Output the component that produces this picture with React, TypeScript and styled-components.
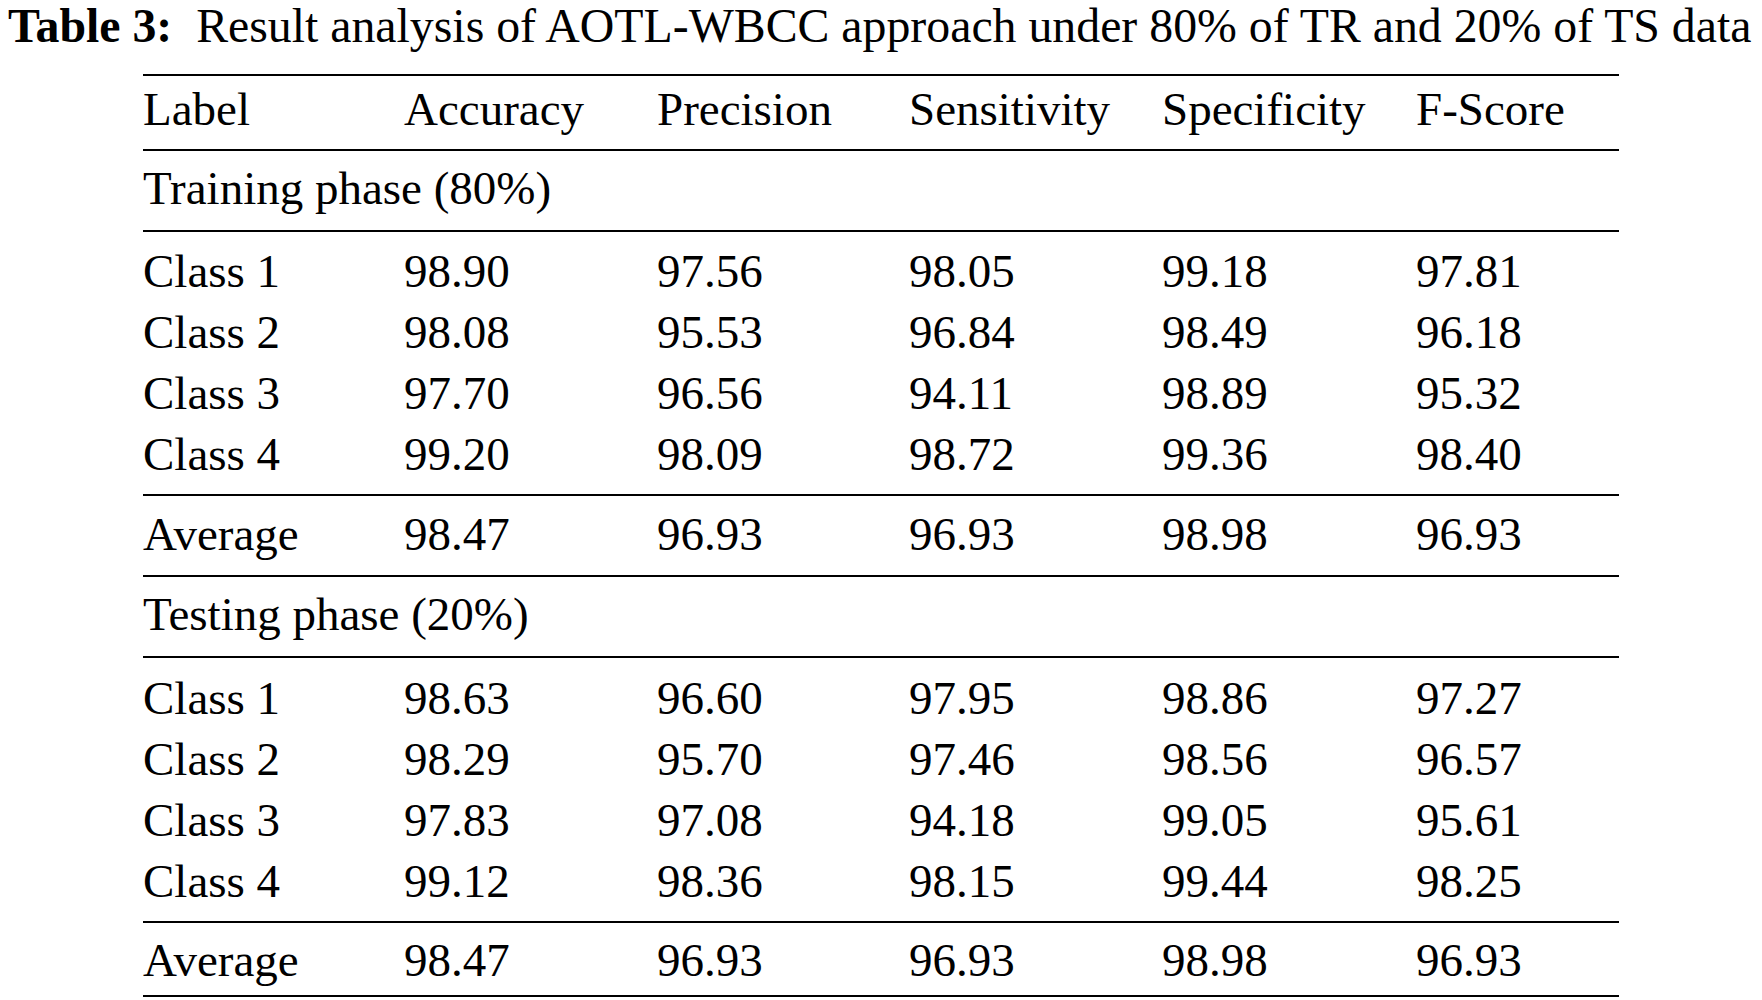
import React from 'react';
import styled, { createGlobalStyle } from 'styled-components';

const GlobalStyle = createGlobalStyle`
  html, body {
    margin: 0;
    padding: 0;
    background: #ffffff;
  }
  body {
    font-family: "Liberation Serif", "Times New Roman", serif;
    color: #000000;
  }
`;

const columns = ['Label', 'Accuracy', 'Precision', 'Sensitivity', 'Specificity', 'F-Score'];
const widths = [261, 253, 252, 253, 254, 203];

type Phase = {
  title: string;
  rows: string[][];
  average: string[];
  // gap under the rule above the first class row
  classTop: number;
};

const phases: Phase[] = [
  {
    title: 'Training phase (80%)',
    rows: [
      ['Class 1', '98.90', '97.56', '98.05', '99.18', '97.81'],
      ['Class 2', '98.08', '95.53', '96.84', '98.49', '96.18'],
      ['Class 3', '97.70', '96.56', '94.11', '98.89', '95.32'],
      ['Class 4', '99.20', '98.09', '98.72', '99.36', '98.40'],
    ],
    average: ['Average', '98.47', '96.93', '96.93', '98.98', '96.93'],
    classTop: 9,
  },
  {
    title: 'Testing phase (20%)',
    rows: [
      ['Class 1', '98.63', '96.60', '97.95', '98.86', '97.27'],
      ['Class 2', '98.29', '95.70', '97.46', '98.56', '96.57'],
      ['Class 3', '97.83', '97.08', '94.18', '99.05', '95.61'],
      ['Class 4', '99.12', '98.36', '98.15', '99.44', '98.25'],
    ],
    average: ['Average', '98.47', '96.93', '96.93', '98.98', '96.93'],
    classTop: 10,
  },
];

const App = () => {
  return (
    <Page>
      <GlobalStyle />
      <Caption>
        <CaptionLabel>Table 3:</CaptionLabel>
        {'\u00a0 '}Result analysis of AOTL-WBCC approach under 80% of TR and 20% of TS data
      </Caption>
      <Table>
        <colgroup>
          {widths.map((w, i) => (
            <col key={i} style={{ width: w }} />
          ))}
        </colgroup>
        <thead>
          <Row $top $padTop={3} $padBottom={9}>
            {columns.map((c) => (
              <Cell key={c}>{c}</Cell>
            ))}
          </Row>
        </thead>
        {phases.map((phase, p) => {
          const last = p === phases.length - 1;
          return (
            <tbody key={phase.title}>
              <Row $top $padTop={7} $padBottom={11}>
                <Cell colSpan={6}>{phase.title}</Cell>
              </Row>
              {phase.rows.map((r, i) => (
                <Row
                  key={r[0]}
                  $top={i === 0}
                  $padTop={i === 0 ? phase.classTop : 0}
                  $padBottom={i === phase.rows.length - 1 ? 9 : 0}
                >
                  {r.map((v, j) => (
                    <Cell key={j}>{v}</Cell>
                  ))}
                </Row>
              ))}
              <Row
                $top
                $bottom={last}
                $padTop={last ? 7 : 8}
                $padBottom={last ? 4 : 10}
              >
                {phase.average.map((v, j) => (
                  <Cell key={j}>{v}</Cell>
                ))}
              </Row>
            </tbody>
          );
        })}
      </Table>
    </Page>
  );
};

export default App;

const Page = styled.div`
  width: 1762px;
  height: 1000px;
  overflow: hidden;
`;

const Caption = styled.div`
  height: 74px;
  padding-left: 8px;
  box-sizing: border-box;
  font-family: "Liberation Serif", "Times New Roman", serif;
  font-size: 47.8px;
  line-height: 52px;
  white-space: nowrap;
`;

const CaptionLabel = styled.span`
  font-weight: bold;
`;

const Table = styled.table`
  margin-left: 143px;
  width: 1476px;
  table-layout: fixed;
  border-collapse: separate;
  border-spacing: 0;
  font-family: "Liberation Serif", "Times New Roman", serif;
  color: #000;
`;

const Row = styled.tr<{ $top?: boolean; $bottom?: boolean; $padTop: number; $padBottom: number }>`
  & > td {
    border-top: ${(p) => (p.$top ? '2px solid #000' : 'none')};
    border-bottom: ${(p) => (p.$bottom ? '2px solid #000' : 'none')};
    padding-top: ${(p) => p.$padTop}px;
    padding-bottom: ${(p) => p.$padBottom}px;
  }
`;

const Cell = styled.td`
  padding: 0;
  font-family: "Liberation Serif", "Times New Roman", serif;
  font-size: 47px;
  font-weight: normal;
  line-height: 61px;
  text-align: left;
  white-space: nowrap;
  vertical-align: top;
`;
